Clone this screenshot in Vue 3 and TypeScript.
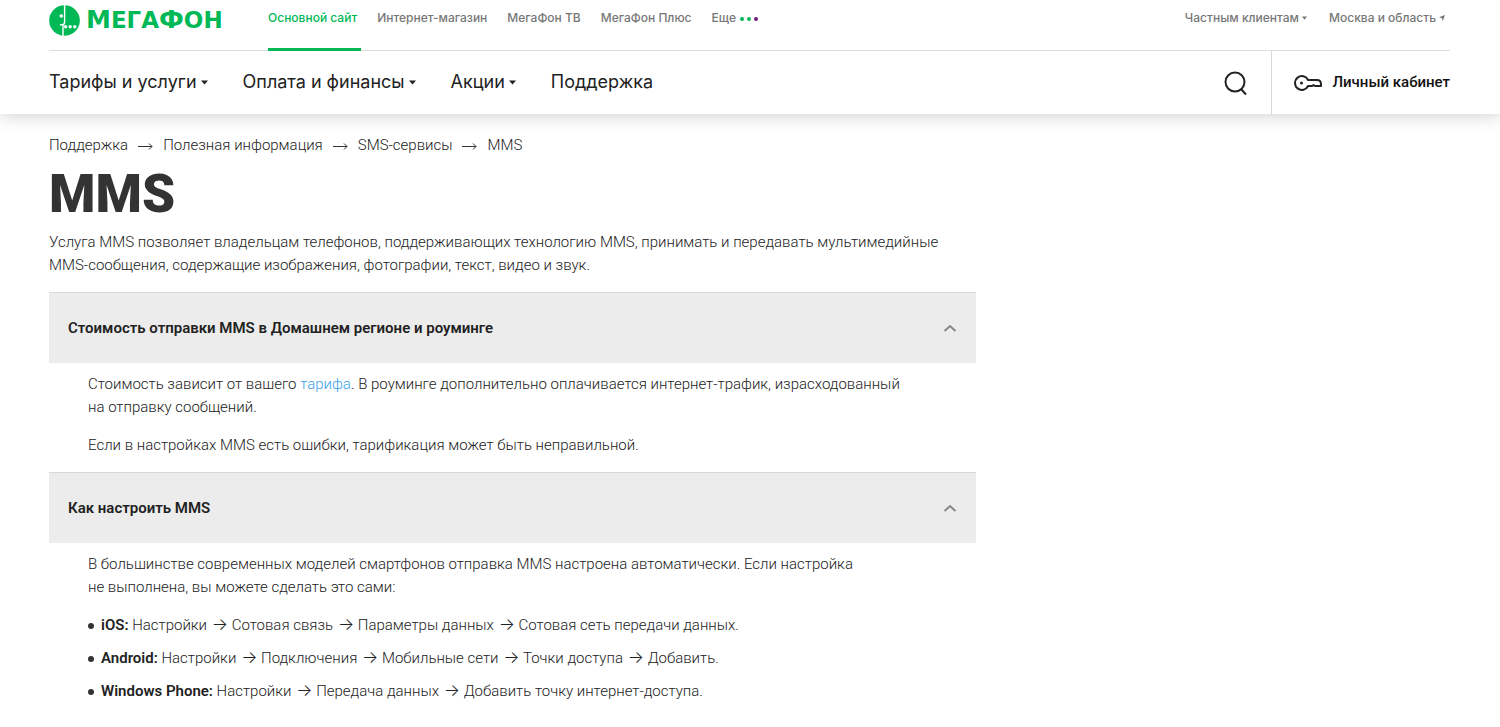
<script setup lang="ts">
import { ref } from 'vue'

interface MenuItem {
  label: string
  dropdown: boolean
}

interface Platform {
  name: string
  steps: string[]
}

const siteLinks: string[] = ['Основной сайт', 'Интернет-магазин', 'МегаФон ТВ', 'МегаФон Плюс']

const menu: MenuItem[] = [
  { label: 'Тарифы и услуги', dropdown: true },
  { label: 'Оплата и финансы', dropdown: true },
  { label: 'Акции', dropdown: true },
  { label: 'Поддержка', dropdown: false },
]

const crumbs: string[] = ['Поддержка', 'Полезная информация', 'SMS-сервисы']

const platforms: Platform[] = [
  { name: 'iOS:', steps: ['Настройки', 'Сотовая связь', 'Параметры данных', 'Сотовая сеть передачи данных.'] },
  { name: 'Android:', steps: ['Настройки', 'Подключения', 'Мобильные сети', 'Точки доступа', 'Добавить.'] },
  { name: 'Windows Phone:', steps: ['Настройки', 'Передача данных', 'Добавить точку интернет-доступа.'] },
]

const costOpen = ref(true)
const setupOpen = ref(true)
</script>

<template>
  <div class="page">
    <header class="header">
      <div class="topbar">
        <a href="#" class="logo" aria-label="МегаФон">
          <svg class="logo-mark" viewBox="0 0 31 31" aria-hidden="true">
            <circle cx="15.5" cy="15.5" r="15.3" fill="#00b956" />
            <path d="M15.600 0v16.500c0 2-.9 3.200-2.300 3.200h-2.300M14 19v12" stroke="#fff" stroke-width="1.400" fill="none" />
            <circle cx="12.300" cy="11" r="1.800" fill="#fff" />
            <circle cx="16.600" cy="21.700" r="1.700" fill="#fff" />
            <circle cx="21.200" cy="21.700" r="1.700" fill="#fff" />
            <circle cx="25.800" cy="21.700" r="1.700" fill="#fff" />
          </svg>
          <span class="logo-text"><span class="big">М</span>ЕГА<span class="big">Ф</span>ОН</span>
        </a>
        <nav class="sites" aria-label="Сайты">
          <a v-for="(s, i) in siteLinks" :key="s" href="#" :class="{ active: i === 0 }">{{ s }}</a>
          <button type="button" class="more">
            Еще
            <svg width="20" height="6" viewBox="0 0 20 6" aria-hidden="true">
              <circle cx="3" cy="4" r="2" fill="#00b956" />
              <circle cx="10" cy="4" r="2" fill="#00b956" />
              <circle cx="17" cy="4" r="2" fill="#731982" />
            </svg>
          </button>
        </nav>
        <div class="region">
          <button type="button">
            Частным клиентам
            <svg width="5" height="4" viewBox="0 0 5 4" aria-hidden="true"><path d="M0 .5h5L2.500 3.800z" fill="#777" /></svg>
          </button>
          <button type="button">
            Москва и область
            <svg width="6" height="6" viewBox="0 0 6 6" aria-hidden="true"><path d="M6 0 3.800 6 2.900 3.200 0 2.300z" fill="#777" /></svg>
          </button>
        </div>
      </div>
      <div class="mainbar">
        <nav class="menu" aria-label="Меню">
          <a v-for="m in menu" :key="m.label" href="#">
            {{ m.label }}
            <svg v-if="m.dropdown" width="7" height="5" viewBox="0 0 7 5" aria-hidden="true"><path d="M0 .5h7L3.500 4.500z" fill="#222" /></svg>
          </a>
        </nav>
        <button type="button" class="search" aria-label="Поиск">
          <svg width="24" height="26" viewBox="0 0 24 26" fill="none" stroke="#222" stroke-width="2" aria-hidden="true">
            <circle cx="11" cy="12" r="9.500" />
            <path d="m17 19 5 5.500" />
          </svg>
        </button>
        <a href="#" class="cabinet">
          <svg width="28" height="16" viewBox="0 0 28 16" fill="none" stroke="#222" stroke-width="2" stroke-linejoin="round" aria-hidden="true">
            <path d="M14.100 5A6.900 6.900 0 1 0 14.100 11H18l1.500-.9 1.500.9h6V9.300c0-2.500-1.700-4.300-4.200-4.300z" />
            <circle cx="7.500" cy="8" r="1.500" fill="#222" stroke="none" />
          </svg>
          Личный кабинет
        </a>
      </div>
    </header>

    <main class="content">
      <nav class="crumbs" aria-label="Навигация">
        <template v-for="c in crumbs" :key="c">
          <a href="#">{{ c }}</a>
          <svg width="15" height="8" viewBox="0 0 15 8" fill="none" stroke="#333" aria-hidden="true"><path d="M0 4.500h14M11 1.500l3 3-3 3" /></svg>
        </template>
        <span>MMS</span>
      </nav>
      <h1>MMS</h1>
      <p class="lead">
        Услуга MMS позволяет владельцам телефонов, поддерживающих технологию MMS, принимать и передавать мультимедийные<br />
        MMS-сообщения, содержащие изображения, фотографии, текст, видео и звук.
      </p>

      <section class="panel">
        <h2>
          <button type="button" :aria-expanded="costOpen" @click="costOpen = !costOpen">
            Стоимость отправки MMS в Домашнем регионе и роуминге
            <svg class="chevron" width="14" height="9" viewBox="0 0 14 9" aria-hidden="true"><path d="m1.500 7 5.500-5 5.500 5" /></svg>
          </button>
        </h2>
        <div v-if="costOpen" class="panel-body">
          <p>
            Стоимость зависит от вашего <a href="#">тарифа</a>. В роуминге дополнительно оплачивается интернет-трафик, израсходованный<br />
            на отправку сообщений.
          </p>
          <p>Если в настройках MMS есть ошибки, тарификация может быть неправильной.</p>
        </div>
      </section>

      <section class="panel">
        <h2>
          <button type="button" :aria-expanded="setupOpen" @click="setupOpen = !setupOpen">
            Как настроить MMS
            <svg class="chevron" width="14" height="9" viewBox="0 0 14 9" aria-hidden="true"><path d="m1.500 7 5.500-5 5.500 5" /></svg>
          </button>
        </h2>
        <div v-if="setupOpen" class="panel-body">
          <p>
            В большинстве современных моделей смартфонов отправка MMS настроена автоматически. Если настройка<br />
            не выполнена, вы можете сделать это сами:
          </p>
          <ul>
            <li v-for="p in platforms" :key="p.name">
              <strong>{{ p.name }}</strong>
              <template v-for="(s, i) in p.steps" :key="s"><span v-if="i > 0" class="arrow"> →</span> {{ s }}</template>
            </li>
          </ul>
        </div>
      </section>
    </main>
  </div>
</template>

<style>
body {
  margin: 0;
  background: #fff;
}
</style>

<style scoped>
.page {
  font-family: Roboto, "Liberation Sans", Arial, sans-serif;
  color: #222;
  font-size: 15px;
  line-height: 23px;
  overflow-x: hidden;
}
a {
  color: inherit;
  text-decoration: none;
}
button {
  font: inherit;
  color: inherit;
  background: none;
  border: 0;
  padding: 0;
  cursor: pointer;
}
.header {
  padding: 0 50px 0 49px;
  box-shadow: 0 2px 16px rgba(0, 0, 0, 0.18);
}
.topbar {
  display: flex;
  height: 50px;
  border-bottom: 1px solid #dedede;
}
.logo {
  display: flex;
  align-items: center;
  gap: 6px;
  height: 40px;
  width: 219px;
  color: #00b956;
}
.logo-mark {
  width: 31px;
  height: 31px;
}
.logo-text {
  font: bold 23px/30px "DejaVu Sans", sans-serif;
}
.big {
  font-size: 25px;
}
.sites,
.region {
  display: flex;
  font-family: Inter, "Liberation Sans", sans-serif;
  font-size: 12px;
  font-weight: 500;
  line-height: 36px;
  color: #777;
}
.sites {
  gap: 16px;
}
.sites a {
  padding-right: 4px;
}
.sites .active {
  color: #00b956;
  border-bottom: 3px solid #00b956;
  height: 48px;
}
.more,
.region button {
  display: flex;
  align-items: center;
  gap: 3px;
  height: 36px;
}
.region {
  gap: 22px;
  margin-left: auto;
  padding-right: 5px;
}
.mainbar {
  display: flex;
  height: 63px;
}
.menu {
  display: flex;
  gap: 35px;
  font-family: Inter, "Liberation Sans", sans-serif;
  font-size: 18px;
  line-height: 62px;
}
.menu a {
  display: flex;
  align-items: center;
  gap: 4px;
  height: 62px;
}
.search {
  display: flex;
  align-items: center;
  margin-left: auto;
  padding: 0 23px;
}
.cabinet {
  display: flex;
  align-items: center;
  gap: 10px;
  padding-left: 22px;
  border-left: 1px solid #d8d8d8;
  color: #111;
  font-weight: 500;
}
.content {
  padding: 20px 50px 0 49px;
  font-weight: 300;
}
.crumbs {
  display: flex;
  align-items: center;
  gap: 10px;
}
h1 {
  margin: 11px 0;
  font-size: 53px;
  line-height: 52px;
  font-weight: 900;
  color: #333;
}
p {
  margin: 0 0 15px;
}
.panel {
  max-width: 927px;
}
h2 {
  margin: 0;
  font-size: 15px;
  font-weight: 600;
}
h2 button {
  display: flex;
  align-items: center;
  justify-content: space-between;
  width: 100%;
  height: 71px;
  padding: 0 19px;
  background: #ececec;
  border-top: 1px solid #d8d8d8;
  text-align: left;
}
.chevron {
  fill: none;
  stroke: #888;
  stroke-width: 2;
}
.panel-body {
  padding: 10px 39px 0;
}
.panel-body a {
  color: #3b9fe8;
}
ul {
  margin: 0;
  padding: 0;
  list-style: none;
}
li {
  position: relative;
  margin-bottom: 10px;
  padding-left: 13px;
}
li::before {
  content: "";
  position: absolute;
  left: 0;
  top: 9px;
  width: 6px;
  height: 6px;
  border-radius: 50%;
  background: #333;
}
strong {
  font-weight: 600;
}
.arrow {
  font-family: Inter, "Liberation Sans", sans-serif;
  font-size: 17px;
  line-height: 1;
}
</style>
